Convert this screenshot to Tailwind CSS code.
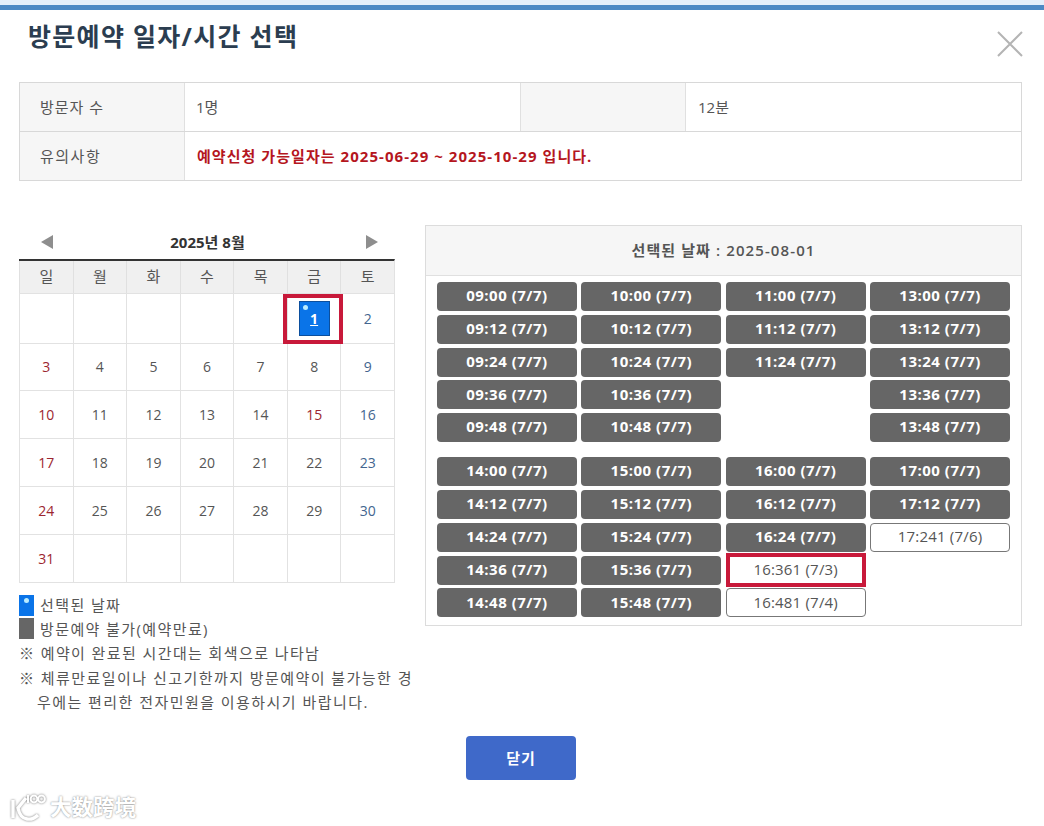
<!DOCTYPE html>
<html lang="ko">

<head>
    <meta charset="UTF-8">
    <title>방문예약 일자/시간 선택</title>
    <script src="https://cdn.jsdelivr.net/npm/@tailwindcss/browser@4"></script>
</head>

<body class="bg-white w-[1044px] h-[826px] overflow-hidden relative font-['Open_Sans','Noto_Sans_CJK_KR',sans-serif] text-[#555]">

    <div class="h-[5px] bg-[#e4effa]"></div>
    <div class="h-[5px] bg-[#4c89c4]"></div>

    <div class="px-[19px] relative">
        <h1 class="pl-[9px] pt-[8px] h-[72px] text-[25px] leading-[36px] font-bold tracking-[1.3px] text-[#2b3d50]">방문예약 일자/시간 선택</h1>
        <svg class="absolute right-[21px] top-[21px] w-[26px] h-[26px]" viewBox="0 0 26 26" fill="none" stroke="#b4b4b4" stroke-width="2">
            <path d="M1 1 L25 25 M25 1 L1 25" />
        </svg>

        <!-- info table -->
        <div class="w-[1003px] border border-[#d8d8d8] text-[15px]">
            <div class="flex h-[49px] border-b border-[#d8d8d8]">
                <div class="w-[165px] bg-[#f6f6f6] border-r border-[#e0e0e0] pl-[20px] flex items-center tracking-[1px]">방문자 수</div>
                <div class="w-[336px] border-r border-[#e0e0e0] pl-[11px] flex items-center">1명</div>
                <div class="w-[165px] bg-[#f6f6f6] border-r border-[#e0e0e0]"></div>
                <div class="flex-1 pl-[12px] flex items-center">12분</div>
            </div>
            <div class="flex h-[48px]">
                <div class="w-[165px] bg-[#f6f6f6] border-r border-[#e0e0e0] pl-[20px] flex items-center tracking-[1.5px]">유의사항</div>
                <div class="flex-1 pl-[12px] flex items-center font-bold tracking-[1.05px] text-[#b5161e]">예약신청 가능일자는 2025-06-29 ~ 2025-10-29 입니다.</div>
            </div>
        </div>

        <div class="flex mt-[44px]">
            <!-- calendar -->
            <div class="w-[406px] shrink-0">
                <div class="w-[376px]">
                    <div class="h-[34px] flex items-center pl-[22px] pr-[17px]">
                        <svg class="w-[12px] h-[14px]" viewBox="0 0 12 14"><path d="M0 7 L12 0 V14 Z" fill="#8e8e8e" /></svg>
                        <span class="flex-1 text-center text-[15px] font-bold text-[#333] pr-[4px]">2025년 8월</span>
                        <svg class="w-[12px] h-[14px]" viewBox="0 0 12 14"><path d="M12 7 L0 0 V14 Z" fill="#8e8e8e" /></svg>
                    </div>
                    <div id="calendar" class="border-t-2 border-[#333] border-b border-r border-[#e2e2e2] border-t-[#333] grid grid-cols-7 grid-rows-[32px_50px_47px_48px_48px_48px_48px] text-[14px]"></div>
                </div>

                <div class="mt-[10px] text-[15px] leading-[24px] tracking-[1.4px]">
                    <div class="flex items-center h-[24px] gap-[6px]">
                        <span class="w-[15px] h-[21px] bg-[#0a74e8] relative"><span class="absolute left-[5px] top-[3px] w-[5px] h-[5px] rounded-full bg-[#b9ecff]"></span></span>
                        선택된 날짜
                    </div>
                    <div class="flex items-center h-[23px] gap-[6px]">
                        <span class="w-[15px] h-[21px] bg-[#666]"></span>
                        방문예약 불가(예약만료)
                    </div>
                    <p class="pl-[18px] -indent-[18px] mt-[1px]">※ 예약이 완료된 시간대는 회색으로 나타남</p>
                    <p class="pl-[18px] -indent-[18px] w-[396px] mt-[1px] tracking-[1.45px]">※ 체류만료일이나 신고기한까지 방문예약이 불가능한 경우에는 편리한 전자민원을 이용하시기 바랍니다.</p>
                </div>
            </div>

            <!-- time slots -->
            <div class="w-[597px] h-[401px] border border-[#dcdcdc]">
                <div class="h-[50px] bg-[#f6f6f6] border-b border-[#e0e0e0] flex items-center justify-center text-[15px] font-semibold tracking-[1.1px]">
                    선택된 날짜 : 2025-08-01
                </div>
                <div class="px-[11px] pt-[6px]">
                    <div id="slots-am" class="grid grid-cols-4 auto-rows-[29px] gap-x-[4.5px] gap-y-[3.8px]"></div>
                    <div id="slots-pm" class="grid grid-cols-4 auto-rows-[29px] gap-x-[4.5px] gap-y-[3.8px] mt-[15px]"></div>
                </div>
            </div>
        </div>
    </div>

    <div class="absolute left-[466px] top-[736px] w-[110px] h-[44px] rounded bg-[#3f69c9] text-white text-[15px] tracking-[1px] font-bold flex items-center justify-center">닫기</div>

    <!-- watermark -->
    <div class="absolute left-[9px] top-[791px] flex items-center gap-[3px]">
        <svg class="w-[38px] h-[30px]" viewBox="0 0 38 30" fill="none" stroke="#fff" stroke-width="3.4" style="filter: drop-shadow(0 0 1px #777)">
            <path d="M4 9 V27 M17 7 L9 17 Q11 27 18 28 Q24 29 29 24" />
            <path d="M19 4 V12" stroke-width="2" />
            <circle cx="25" cy="8" r="3.4" stroke-width="2" />
            <circle cx="32.5" cy="8" r="3.4" stroke-width="2" />
        </svg>
        <span class="text-[21.5px] leading-[26px] font-bold text-white [text-shadow:0_0_2px_#777] font-['Noto_Sans_CJK_SC',sans-serif]">大数跨境</span>
    </div>

    <script>
        const dayHead = ['일', '월', '화', '수', '목', '금', '토'];
        const calendar = document.getElementById('calendar');

        dayHead.forEach(d => {
            calendar.innerHTML += `<div class="bg-[#f0f0f0] border-l border-[#e0e0e0] flex items-center justify-center text-[15px] pb-[2px]">${d}</div>`;
        });

        for (let i = 0; i < 35 + 7; i++) {
            const day = i - 4;
            let text = day >= 1 && day <= 31 ? day : '';
            let color = 'text-[#555]';
            if (i % 7 === 0 || day === 15) color = 'text-[#9c2630]';
            if (i % 7 === 6) color = 'text-[#43658f]';
            if (day === 1) {
                text = `<span class="relative w-[31px] h-[35px] bg-[#0a74e8] border border-[#0b4f9e] flex items-center justify-center text-white font-bold underline"><span class="absolute left-[3px] top-[3px] w-[5px] h-[5px] rounded-full bg-[#b9ecff]"></span>1</span><span class="absolute z-10 -left-[5px] top-0 w-[60px] h-[50px] border-[4px] border-[#c8193a]"></span>`;
            }
            calendar.innerHTML += `<div class="relative border-l border-t border-[#e2e2e2] flex items-center justify-center pb-[1px] ${color}">${text}</div>`;
        }

        function slot(label) {
            if (!label) return '<div></div>';
            if (label.endsWith('*')) {
                return `<div class="relative rounded-[4px] bg-white border border-[#777] flex items-center justify-center pb-[2px] text-[15px] tracking-[0.2px]">${label.slice(0, -1)}<span class="absolute -left-px -right-px -top-[4px] -bottom-[3px] border-[4px] border-[#c8193a]"></span></div>`;
            }
            if (label.endsWith(')') && !label.includes('(7/7)')) {
                return `<div class="rounded-[4px] bg-white border border-[#777] flex items-center justify-center pb-[2px] text-[15px] tracking-[0.2px]">${label}</div>`;
            }
            return `<div class="rounded-[4px] bg-[#666] text-white font-bold flex items-center justify-center pb-[2px] text-[15px] tracking-[0.5px]">${label}</div>`;
        }

        const am = [
            '09:00 (7/7)', '10:00 (7/7)', '11:00 (7/7)', '13:00 (7/7)',
            '09:12 (7/7)', '10:12 (7/7)', '11:12 (7/7)', '13:12 (7/7)',
            '09:24 (7/7)', '10:24 (7/7)', '11:24 (7/7)', '13:24 (7/7)',
            '09:36 (7/7)', '10:36 (7/7)', '', '13:36 (7/7)',
            '09:48 (7/7)', '10:48 (7/7)', '', '13:48 (7/7)'
        ];
        const pm = [
            '14:00 (7/7)', '15:00 (7/7)', '16:00 (7/7)', '17:00 (7/7)',
            '14:12 (7/7)', '15:12 (7/7)', '16:12 (7/7)', '17:12 (7/7)',
            '14:24 (7/7)', '15:24 (7/7)', '16:24 (7/7)', '17:241 (7/6)',
            '14:36 (7/7)', '15:36 (7/7)', '16:361 (7/3)*', '',
            '14:48 (7/7)', '15:48 (7/7)', '16:481 (7/4)', ''
        ];
        document.getElementById('slots-am').innerHTML = am.map(slot).join('');
        document.getElementById('slots-pm').innerHTML = pm.map(slot).join('');
    </script>

</body>

</html>
